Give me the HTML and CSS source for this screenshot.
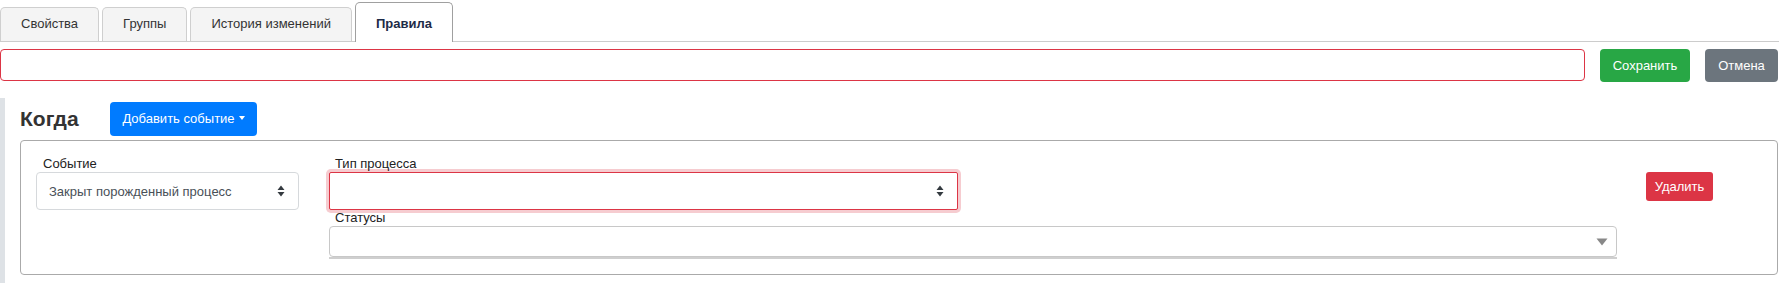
FILE: index.html
```html
<!DOCTYPE html>
<html lang="ru">
<head>
<meta charset="utf-8">
<title>Правила</title>
<link rel="stylesheet" href="styles.css">
</head>
<body>
<div class="tabs">
  <div class="tab">Свойства</div>
  <div class="tab">Группы</div>
  <div class="tab">История изменений</div>
  <div class="tab tab-active">Правила</div>
</div>
<div class="name-row">
  <div class="name-input"></div>
  <button class="btn btn-save">Сохранить</button>
  <button class="btn btn-cancel">Отмена</button>
</div>
<div class="section">
  <div class="section-head">
    <h4 class="section-title">Когда</h4>
    <button class="btn btn-add">Добавить событие<span class="caret"></span></button>
  </div>
  <div class="event-box">
    <div class="col-event">
      <div class="field-label">Событие</div>
      <div class="select">
        <span class="select-text">Закрыт порожденный процесс</span>
        <svg class="updown" width="8" height="12" viewBox="0 0 8 12"><path d="M4 0.5 L7.5 5 H0.5 Z M4 11.5 L7.5 7 H0.5 Z" fill="#343a40"/></svg>
      </div>
    </div>
    <div class="col-process">
      <div class="field-label">Тип процесса</div>
      <div class="select select-invalid">
        <span class="select-text"></span>
        <svg class="updown" width="8" height="12" viewBox="0 0 8 12"><path d="M4 0.5 L7.5 5 H0.5 Z M4 11.5 L7.5 7 H0.5 Z" fill="#343a40"/></svg>
      </div>
      <div class="field-label">Статусы</div>
      <div class="multi">
        <svg class="down" width="12" height="8" viewBox="0 0 12 8"><path d="M0.5 0.5 H11.5 L6 7.5 Z" fill="#888"/></svg>
      </div>
      <div class="multi-line"></div>
    </div>
    <div class="col-actions">
      <button class="btn btn-delete">Удалить</button>
    </div>
  </div>
</div>
</body>
</html>
```

FILE: styles.css
```css
* { box-sizing: border-box; }
html, body { margin: 0; padding: 0; background: #fff; }
body {
  font-family: "Liberation Sans", Arial, sans-serif;
  font-size: 13px;
  color: #212529;
  width: 1779px;
  overflow: hidden;
}

.tabs {
  display: flex;
  align-items: flex-end;
  gap: 3px;
  height: 42px;
  border-bottom: 1px solid #cccccc;
}
.tab {
  height: 34px;
  padding: 6px 20px 0;
  line-height: 20px;
  color: #333;
  background: #f4f4f4;
  border: 1px solid #cfcfcf;
  border-bottom: none;
  border-radius: 5px 5px 0 0;
  white-space: nowrap;
}
.tab-active {
  height: 40px;
  margin-bottom: -1px;
  padding-top: 11px;
  background: #fff;
  border-color: #a0a0a0;
  font-weight: bold;
  color: #1d2b47;
}

.name-row {
  display: flex;
  align-items: flex-start;
  gap: 15px;
  padding: 7px 1px 0 0;
}
.name-input {
  flex: 1;
  height: 32px;
  border: 1px solid #dc3545;
  border-radius: 4px;
}
.btn {
  font-family: "Liberation Sans", Arial, sans-serif;
  font-size: 13px;
  color: #fff;
  border: 1px solid transparent;
  border-radius: 4px;
  padding: 0 12px;
  line-height: 20px;
  cursor: pointer;
  white-space: nowrap;
}
.btn-save { height: 33px; width: 90px; padding: 0; background: #28a745; }
.btn-cancel { height: 33px; width: 73px; padding: 0; background: #6c757d; }

.section {
  margin-top: 16px;
  border-left: 5px solid #dee2e6;
  padding: 4px 1px 8px 15px;
}
.section-head {
  display: flex;
  align-items: center;
  margin-bottom: 4px;
}
.section-title {
  width: 90px;
  margin: 0;
  font-size: 21px;
  font-weight: bold;
  color: #333;
  line-height: 24px;
}
.btn-add {
  height: 34px;
  width: 147px;
  padding: 0;
  background: #007bff;
}
.caret {
  display: inline-block;
  margin-left: 4px;
  vertical-align: 3px;
  border-top: 4px solid #fff;
  border-left: 3.5px solid transparent;
  border-right: 3.5px solid transparent;
}

.event-box {
  display: flex;
  align-items: flex-start;
  border: 1px solid #aaaaaa;
  border-radius: 4px;
  padding: 15px;
  height: 135px;
}
.col-event { width: 263px; }
.col-process { width: 1288px; margin-left: 30px; }
.col-actions { margin-left: 29px; padding-top: 16px; }

.field-label {
  height: 16px;
  line-height: 16px;
  padding-left: 7px;
  color: #222;
  font-size: 13px;
}
.col-process .field-label { padding-left: 6px; }

.select {
  display: flex;
  align-items: center;
  height: 38px;
  border: 1px solid #d6d9dc;
  border-radius: 4px;
  padding: 0 12px;
  color: #495057;
  background: #fff;
}
.col-process .select { width: 629px; }
.select-text { flex: 1; white-space: nowrap; }
.updown { flex: none; margin-right: 1px; }
.select-invalid {
  border-color: #dc3545;
  border-radius: 2px;
  box-shadow: 0 0 0 3px rgba(220, 53, 69, 0.25);
}

.multi {
  display: flex;
  align-items: center;
  justify-content: flex-end;
  height: 31px;
  border: 1px solid #c8c8c8;
  border-radius: 4px;
  padding-right: 8px;
  background: #fff;
}
.multi-line {
  height: 2px;
  background: #cfcfcf;
}

.btn-delete {
  height: 29px;
  width: 67px;
  padding: 0;
  background: #dc3545;
  border-radius: 3px;
}
```
